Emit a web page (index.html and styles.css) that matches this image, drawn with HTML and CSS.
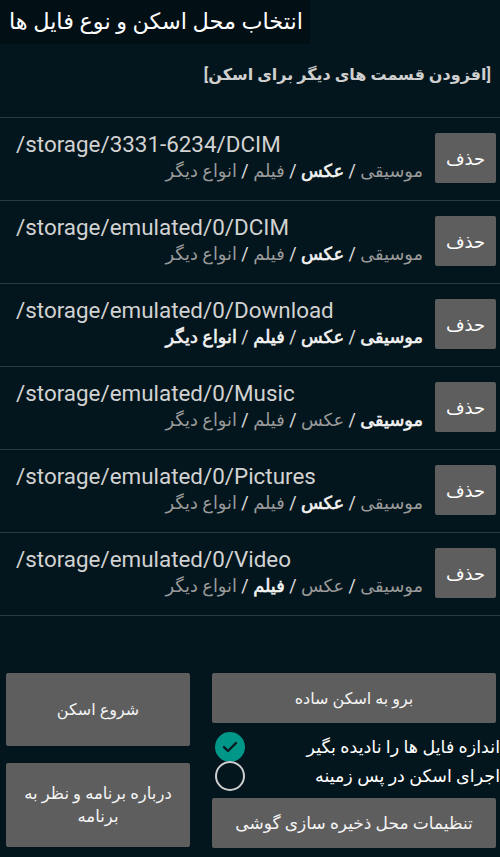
FILE: index.html
```html
<!DOCTYPE html>
<html lang="fa">
<head>
<meta charset="utf-8">
<link rel="stylesheet" href="styles.css">
</head>
<body>
<div class="screen">
  <div class="titlebar" dir="rtl">انتخاب محل اسکن و نوع فایل ها</div>
  <div class="addmore" dir="rtl">[افزودن قسمت های دیگر برای اسکن]</div>
  <div class="list">
    <div class="row">
      <div class="info">
        <div class="path">/storage/3331-6234/DCIM</div>
        <div class="types" dir="rtl"><span>موسیقی</span> <i>/</i> <b>عکس</b> <i>/</i> <span>فیلم</span> <i>/</i> <span>انواع دیگر</span></div>
      </div>
      <button class="del">حذف</button>
    </div>
    <div class="row">
      <div class="info">
        <div class="path">/storage/emulated/0/DCIM</div>
        <div class="types" dir="rtl"><span>موسیقی</span> <i>/</i> <b>عکس</b> <i>/</i> <span>فیلم</span> <i>/</i> <span>انواع دیگر</span></div>
      </div>
      <button class="del">حذف</button>
    </div>
    <div class="row">
      <div class="info">
        <div class="path">/storage/emulated/0/Download</div>
        <div class="types" dir="rtl"><b>موسیقی</b> <i>/</i> <b>عکس</b> <i>/</i> <b>فیلم</b> <i>/</i> <b>انواع دیگر</b></div>
      </div>
      <button class="del">حذف</button>
    </div>
    <div class="row">
      <div class="info">
        <div class="path">/storage/emulated/0/Music</div>
        <div class="types" dir="rtl"><b>موسیقی</b> <i>/</i> <span>عکس</span> <i>/</i> <span>فیلم</span> <i>/</i> <span>انواع دیگر</span></div>
      </div>
      <button class="del">حذف</button>
    </div>
    <div class="row">
      <div class="info">
        <div class="path">/storage/emulated/0/Pictures</div>
        <div class="types" dir="rtl"><span>موسیقی</span> <i>/</i> <b>عکس</b> <i>/</i> <span>فیلم</span> <i>/</i> <span>انواع دیگر</span></div>
      </div>
      <button class="del">حذف</button>
    </div>
    <div class="row">
      <div class="info">
        <div class="path">/storage/emulated/0/Video</div>
        <div class="types" dir="rtl"><span>موسیقی</span> <i>/</i> <span>عکس</span> <i>/</i> <b>فیلم</b> <i>/</i> <span>انواع دیگر</span></div>
      </div>
      <button class="del">حذف</button>
    </div>
  </div>

  <div class="bottom">
    <div class="col-left">
      <button class="btn btn-start" dir="rtl">شروع اسکن</button>
      <button class="btn btn-about" dir="rtl">درباره برنامه و نظر به برنامه</button>
    </div>
    <div class="col-right">
      <button class="btn btn-simple" dir="rtl">برو به اسکن ساده</button>
      <div class="checks">
        <div class="check">
          <span class="circle on"><svg width="16" height="12" viewBox="0 0 16 12"><path d="M2 6.2 L6 10 L14 2" fill="none" stroke="#0b1a1f" stroke-width="2.4" stroke-linecap="round" stroke-linejoin="round"/></svg></span>
          <span class="label" dir="rtl">اندازه فایل ها را نادیده بگیر</span>
        </div>
        <div class="check">
          <span class="circle"></span>
          <span class="label" dir="rtl">اجرای اسکن در پس زمینه</span>
        </div>
      </div>
      <button class="btn btn-settings" dir="rtl">تنظیمات محل ذخیره سازی گوشی</button>
    </div>
  </div>
</div>
</body>
</html>
```

FILE: styles.css
```css
html, body {
  margin: 0;
  padding: 0;
  background: #03161d;
}
.screen {
  width: 500px;
  height: 857px;
  display: flex;
  flex-direction: column;
  font-family: Roboto, "DejaVu Sans", sans-serif;
  color: #fff;
  overflow: hidden;
}
.titlebar {
  align-self: flex-start;
  min-width: 310px;
  height: 44px;
  box-sizing: border-box;
  background: #020f15;
  padding: 0 7px 0 8px;
  font-size: 22.4px;
  line-height: 42px;
  white-space: nowrap;
  color: #fff;
}
.addmore {
  margin-top: 19px;
  padding-right: 9px;
  height: 54px;
  font-size: 16px;
  font-weight: bold;
  line-height: 24px;
  color: #cfcfcf;
  white-space: nowrap;
}
.list {
  border-top: 1px solid #2b3a41;
}
.row {
  display: flex;
  align-items: center;
  height: 82px;
  border-bottom: 1px solid #2b3a41;
}
.info {
  flex: 1;
  padding: 0 12px 0 16px;
  margin-top: -4px;
}
.path {
  font-size: 22.4px;
  line-height: 26px;
  color: #d2d2d2;
  white-space: nowrap;
}
.types {
  font-size: 17.8px;
  line-height: 27px;
  color: #9a9a9a;
  white-space: nowrap;
}
.types b {
  font-weight: normal;
  color: #f2f2f2;
  -webkit-text-stroke: 0.6px #f2f2f2;
}
.types i {
  font-style: normal;
  color: #e0e0e0;
}
.del {
  width: 61px;
  height: 50px;
  margin-right: 4px;
  margin-top: -2px;
  border: none;
  border-radius: 2px;
  background: #5e5e5e;
  color: #fff;
  font-family: Roboto, "DejaVu Sans", sans-serif;
  font-size: 18px;
  padding: 0;
}
.bottom {
  margin-top: auto;
  display: flex;
  gap: 22px;
  padding: 0 4px 9px 6px;
}
.col-left {
  width: 184px;
  display: flex;
  flex-direction: column;
  gap: 17px;
}
.col-right {
  flex: 1;
  display: flex;
  flex-direction: column;
}
.btn {
  border: none;
  border-radius: 2px;
  background: #5e5e5e;
  color: #f4f4f4;
  font-family: Roboto, "DejaVu Sans", sans-serif;
  font-size: 16px;
  line-height: 23px;
  padding: 0 12px;
}
.btn-start { height: 73px; }
.btn-about { height: 84px; font-size: 16.5px; }
.btn-simple { height: 50px; }
.btn-settings { height: 50px; font-size: 17px; }
.checks {
  display: flex;
  flex-direction: column;
  padding: 9px 0 8px 3px;
  margin-right: -4px;
}
.check {
  display: flex;
  align-items: center;
  justify-content: space-between;
  height: 29px;
}
.circle {
  width: 26px;
  height: 26px;
  border-radius: 50%;
  border: 2px solid #cfcfcf;
  display: flex;
  align-items: center;
  justify-content: center;
}
.circle.on {
  border-color: #009688;
  background: #009688;
}
.label {
  font-size: 17.5px;
  color: #fff;
  white-space: nowrap;
}
```
